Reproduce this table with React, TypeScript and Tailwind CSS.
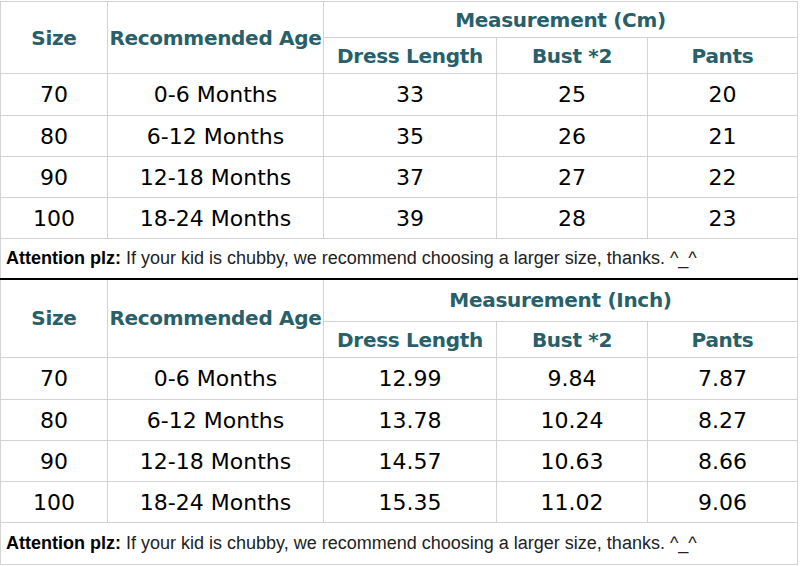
import React from "react";

type Row = { size: string; age: string; dress: string; bust: string; pants: string };

const CM: Row[] = [
  { size: "70", age: "0-6 Months", dress: "33", bust: "25", pants: "20" },
  { size: "80", age: "6-12 Months", dress: "35", bust: "26", pants: "21" },
  { size: "90", age: "12-18 Months", dress: "37", bust: "27", pants: "22" },
  { size: "100", age: "18-24 Months", dress: "39", bust: "28", pants: "23" },
];

const INCH: Row[] = [
  { size: "70", age: "0-6 Months", dress: "12.99", bust: "9.84", pants: "7.87" },
  { size: "80", age: "6-12 Months", dress: "13.78", bust: "10.24", pants: "8.27" },
  { size: "90", age: "12-18 Months", dress: "14.57", bust: "10.63", pants: "8.66" },
  { size: "100", age: "18-24 Months", dress: "15.35", bust: "11.02", pants: "9.06" },
];

const comic = "font-['Comic_Sans_MS','DejaVu_Sans',sans-serif]";
const cell = "border border-[#d3d3d3] p-0 text-center";
const head = `${cell} whitespace-nowrap font-bold text-[#285f69] text-[20px] tracking-[-0.3px]`;

function SizeTable({ unit, rows, first }: { unit: string; rows: Row[]; first?: boolean }) {
  const top = first ? "" : "border-t-2 border-t-black";
  return (
    <>
      <tr className={first ? "h-[36px]" : "h-[43px]"}>
        <td rowSpan={2} className={`${head} ${top}`}>
          Size
        </td>
        <td rowSpan={2} className={`${head} ${top}`}>
          Recommended Age
        </td>
        <td colSpan={3} className={`${head} ${top}`}>
          Measurement ({unit})
        </td>
      </tr>
      <tr className="h-[36px]">
        <td className={head}>Dress Length</td>
        <td className={head}>Bust *2</td>
        <td className={head}>Pants</td>
      </tr>
      {rows.map((r, i) => (
        <tr key={r.size} className={`${i === 0 ? "h-[42px]" : "h-[41px]"} text-[22px] text-black`}>
          <td className={cell}>{r.size}</td>
          <td className={cell}>{r.age}</td>
          <td className={cell}>{r.dress}</td>
          <td className={cell}>{r.bust}</td>
          <td className={cell}>{r.pants}</td>
        </tr>
      ))}
      <tr className={first ? "h-[40px]" : "h-[42px]"}>
        <td
          colSpan={5}
          className="whitespace-nowrap border border-[#d3d3d3] px-[5px] text-left font-['Liberation_Sans',Arial,sans-serif] text-[18px] text-[#222]"
        >
          <b className="text-black">Attention plz:</b> If your kid is chubby, we recommend choosing a
          larger size, thanks. ^_^
        </td>
      </tr>
    </>
  );
}

export default function App() {
  return (
    <div className="h-[566px] w-[800px] bg-white pt-px">
      <table className={`w-[797px] table-fixed border-collapse ${comic}`}>
        <colgroup>
          <col className="w-[107px]" />
          <col className="w-[216px]" />
          <col className="w-[173px]" />
          <col className="w-[151px]" />
          <col className="w-[150px]" />
        </colgroup>
        <tbody>
          <SizeTable unit="Cm" rows={CM} first />
          <SizeTable unit="Inch" rows={INCH} />
        </tbody>
      </table>
    </div>
  );
}
